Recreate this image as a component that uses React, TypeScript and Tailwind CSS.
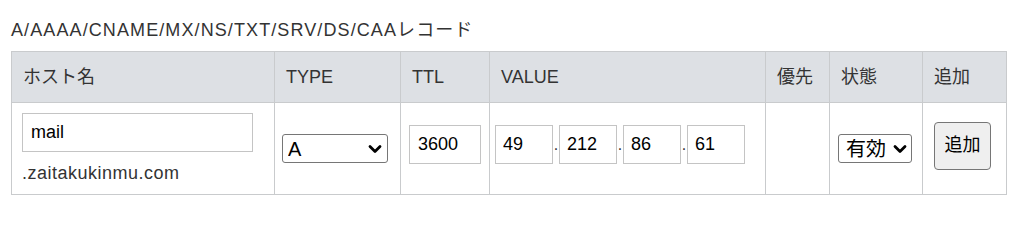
import React, { useState } from 'react';

function Chevron({ right }: { right: string }) {
  return (
    <svg width="14" height="9" viewBox="0 0 14 9" className={`pointer-events-none absolute top-1/2 -translate-y-1/2 ${right}`}>
      <path d="M2 2 L7 7 L12 2" fill="none" stroke="#000" strokeWidth="2.8" strokeLinecap="round" strokeLinejoin="round" />
    </svg>
  );
}

export default function App() {
  const [host, setHost] = useState('mail');
  const [type, setType] = useState('A');
  const [ttl, setTtl] = useState('3600');
  const [ip, setIp] = useState(['49', '212', '86', '61']);
  const [status, setStatus] = useState('有効');

  const setOctet = (i: number, v: string) => {
    const next = [...ip];
    next[i] = v;
    setIp(next);
  };

  return (
    <div className="w-[1024px] h-[212px] bg-white pt-[18px] pl-[11px] text-[#333] font-['Liberation_Sans','Noto_Sans_CJK_JP',sans-serif]">
      {/* タイトル */}
      <h2 className="h-[24px] leading-[24px] text-[18px] tracking-[1.1px] mb-[9px] font-normal">
        A/AAAA/CNAME/MX/NS/TXT/SRV/DS/CAAレコード
      </h2>

      <table className="table-fixed border-collapse w-[995px] text-[18px]">
        <colgroup>
          <col className="w-[263px]" />
          <col className="w-[126px]" />
          <col className="w-[89px]" />
          <col className="w-[276px]" />
          <col className="w-[64px]" />
          <col className="w-[93px]" />
          <col className="w-[84px]" />
        </colgroup>
        <thead>
          <tr className="h-[51px] bg-[#dde0e4]">
            {['ホスト名', 'TYPE', 'TTL', 'VALUE', '優先', '状態', '追加'].map((h) => (
              <th key={h} className="border border-[#c9cbcd] text-left font-normal pl-[11px] align-middle">
                {h}
              </th>
            ))}
          </tr>
        </thead>
        <tbody>
          <tr className="h-[92px]">
            {/* ホスト名 */}
            <td className="border border-[#c9cbcd] align-top pt-[10px] px-[10px]">
              <input
                value={host}
                onChange={(e) => setHost(e.target.value)}
                className="block w-[231px] h-[39px] border border-[#c4c4c4] px-[8px] text-black outline-none"
              />
              <div className="mt-[9px] h-[24px] leading-[24px] tracking-[0.5px]">.zaitakukinmu.com</div>
            </td>

            {/* TYPE */}
            <td className="border border-[#c9cbcd] align-middle pl-[7px]">
              <div className="relative w-[106px] h-[29px]">
                <select
                  value={type}
                  onChange={(e) => setType(e.target.value)}
                  className="appearance-none w-full h-full bg-white border border-[#767676] rounded-[3px] pl-[5px] text-[20px] leading-none text-black outline-none"
                >
                  {['A', 'AAAA', 'CNAME', 'MX', 'NS', 'TXT', 'SRV', 'DS', 'CAA'].map((t) => (
                    <option key={t}>{t}</option>
                  ))}
                </select>
                <Chevron right="right-[6px]" />
              </div>
            </td>

            {/* TTL */}
            <td className="border border-[#c9cbcd] align-middle pl-[8px]">
              <input
                value={ttl}
                onChange={(e) => setTtl(e.target.value)}
                className="block w-[72px] h-[39px] mb-[8px] border border-[#c4c4c4] px-[8px] text-black outline-none"
              />
            </td>

            {/* VALUE */}
            <td className="border border-[#c9cbcd] align-middle pl-[5px]">
              <div className="flex items-baseline mb-[8px]">
                {ip.map((o, i) => (
                  <React.Fragment key={i}>
                    {i > 0 && <span className="w-[6px] text-center text-[16px] text-[#333]">.</span>}
                    <input
                      value={o}
                      onChange={(e) => setOctet(i, e.target.value)}
                      className="w-[58px] h-[39px] border border-[#c4c4c4] px-[7px] text-black outline-none"
                    />
                  </React.Fragment>
                ))}
              </div>
            </td>

            {/* 優先 */}
            <td className="border border-[#c9cbcd]" />

            {/* 状態 */}
            <td className="border border-[#c9cbcd] align-middle pl-[8px]">
              <div className="relative w-[74px] h-[29px]">
                <select
                  value={status}
                  onChange={(e) => setStatus(e.target.value)}
                  className="appearance-none w-full h-full bg-white border border-[#767676] rounded-[3px] pl-[7px] text-[20px] leading-none text-black outline-none"
                >
                  <option>有効</option>
                  <option>無効</option>
                </select>
                <Chevron right="right-[5px]" />
              </div>
            </td>

            {/* 追加 */}
            <td className="border border-[#c9cbcd] align-middle pl-[11px]">
              <button className="w-[57px] h-[48px] mb-[6px] bg-[#efefef] border border-[#767676] rounded-[4px] text-[18px] text-black">
                追加
              </button>
            </td>
          </tr>
        </tbody>
      </table>
    </div>
  );
}
